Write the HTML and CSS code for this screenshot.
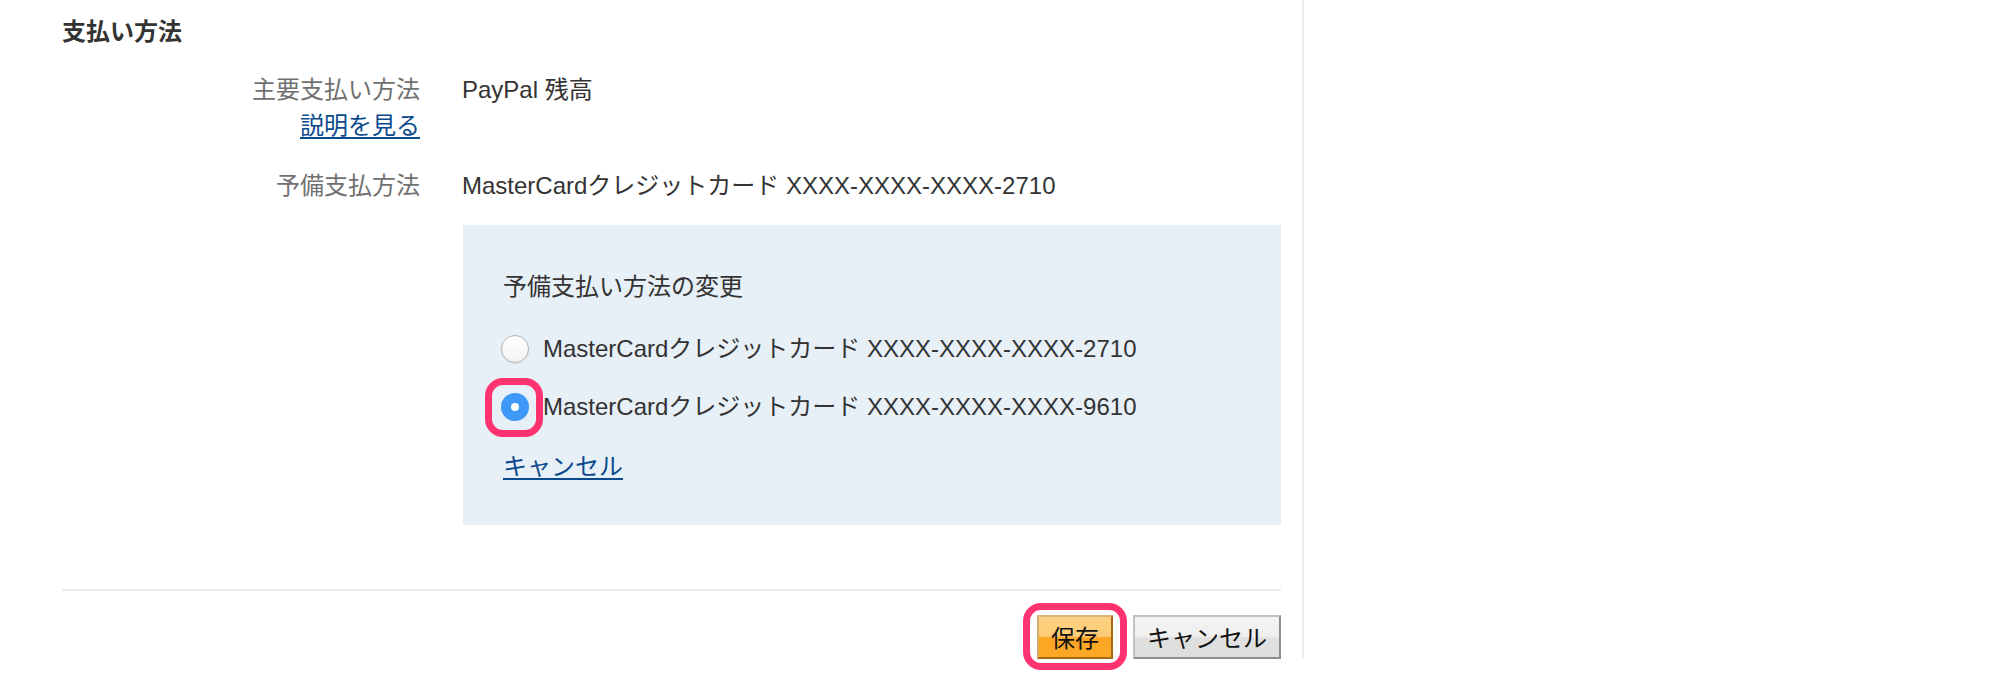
FILE: index.html
```html
<!DOCTYPE html>
<html lang="ja">
<head>
<meta charset="utf-8">
<title>支払い方法</title>
<link rel="stylesheet" href="styles.css">
</head>
<body>
<div class="page">
  <div class="main">
    <h2 class="section-title">支払い方法</h2>
    <div class="fields">
      <div class="label">主要支払い方法<br><a href="#" class="link">説明を見る</a></div>
      <div class="value">PayPal 残高</div>

      <div class="label row2">予備支払方法</div>
      <div class="value row2">MasterCardクレジットカード XXXX-XXXX-XXXX-2710</div>

      <div class="change-box">
        <div class="box-title">予備支払い方法の変更</div>
        <div class="radio-list">
          <label class="radio-row">
            <span class="radio"></span>
            <span>MasterCardクレジットカード XXXX-XXXX-XXXX-2710</span>
          </label>
          <label class="radio-row second">
            <span class="radio checked"><span class="highlight highlight-radio"></span></span>
            <span>MasterCardクレジットカード XXXX-XXXX-XXXX-9610</span>
          </label>
        </div>
        <a href="#" class="link box-cancel">キャンセル</a>
      </div>
    </div>
    <div class="divider"></div>
    <div class="actions">
      <span class="btn-wrap">
        <button class="btn btn-save" type="button">保存</button>
        <span class="highlight highlight-btn"></span>
      </span>
      <button class="btn btn-cancel" type="button">キャンセル</button>
    </div>
  </div>
  <div class="side"></div>
</div>
</body>
</html>
```

FILE: styles.css
```css
* {
  box-sizing: border-box;
}

html, body {
  margin: 0;
  padding: 0;
  height: 100%;
  background: #ffffff;
}

body {
  font-family: "Liberation Sans", "Noto Sans CJK JP", sans-serif;
  font-size: 24px;
  line-height: 36px;
  color: #333333;
}

.page {
  display: flex;
  align-items: flex-start;
  min-height: 100%;
}

.main {
  width: 1304px;
  height: 659px;
  padding: 14px 21px 0 62px;
  border-right: 2px solid #ececec;
}

.side {
  flex: 1;
}

.section-title {
  margin: 0;
  font-size: 24px;
  line-height: 36px;
  font-weight: bold;
  color: #333333;
}

.fields {
  display: grid;
  grid-template-columns: 358px 1fr;
  column-gap: 42px;
  margin-top: 22px;
}

.label {
  text-align: right;
  color: #707070;
}

.value {
  color: #333333;
}

.row2 {
  margin-top: 24px;
}

.link {
  color: #0b4a8d;
  text-decoration: underline;
  text-decoration-thickness: 2px;
  text-underline-offset: 3px;
}

.change-box {
  grid-column: 2;
  margin-top: 21px;
  margin-left: 1px;
  height: 300px;
  background: #e7eff7;
  padding: 44px 40px 0 40px;
}

.box-title {
  color: #333333;
}

.radio-list {
  margin-top: 26px;
  display: flex;
  flex-direction: column;
  gap: 22px;
}

.radio-row {
  display: flex;
  align-items: center;
  gap: 14px;
  height: 36px;
  color: #333333;
  margin-left: -2px;
}

.radio {
  position: relative;
  flex: none;
  width: 28px;
  height: 28px;
  border-radius: 50%;
  border: 1px solid #b3b3b3;
  background: linear-gradient(#ffffff, #f4f4f4);
  box-shadow: 0 1px 1px rgba(0, 0, 0, 0.08);
}

.radio.checked {
  border: none;
  background: #3d98f7;
  box-shadow: none;
}

.radio.checked::after {
  content: "";
  position: absolute;
  left: 10px;
  top: 10px;
  width: 8px;
  height: 8px;
  border-radius: 50%;
  background: #ffffff;
}

.box-cancel {
  display: inline-block;
  margin-top: 24px;
}

.highlight {
  position: absolute;
  border: 7px solid #ff3370;
  border-radius: 18px;
  pointer-events: none;
}

.highlight-radio {
  left: -16px;
  top: -15px;
  width: 58px;
  height: 59px;
}

.divider {
  margin-top: 64px;
  height: 2px;
  background: #ececec;
}

.actions {
  margin-top: 24px;
  display: flex;
  justify-content: flex-end;
  gap: 20px;
}

.btn-wrap {
  position: relative;
  display: block;
  height: 44px;
}

.btn {
  display: block;
  height: 44px;
  padding: 0;
  font-family: "Noto Sans CJK JP", "Liberation Sans", sans-serif;
  font-size: 24px;
  line-height: 1;
  color: #111111;
  border-style: solid;
  border-width: 2px;
  cursor: pointer;
}

.btn-save {
  width: 76px;
  background: linear-gradient(#fdd283 0%, #fdcb76 48%, #fba523 52%, #fca727 100%);
  border-color: #dab57a #a66a12 #a66a12 #d5ad70;
}

.btn-cancel {
  width: 148px;
  background: linear-gradient(#f3f3f3 0%, #efefef 48%, #e0e0e0 52%, #dedede 100%);
  border-color: #c2c2c2 #8e8e8e #8e8e8e #c2c2c2;
}

.highlight-btn {
  left: -14px;
  top: -12px;
  width: 104px;
  height: 67px;
}
```
